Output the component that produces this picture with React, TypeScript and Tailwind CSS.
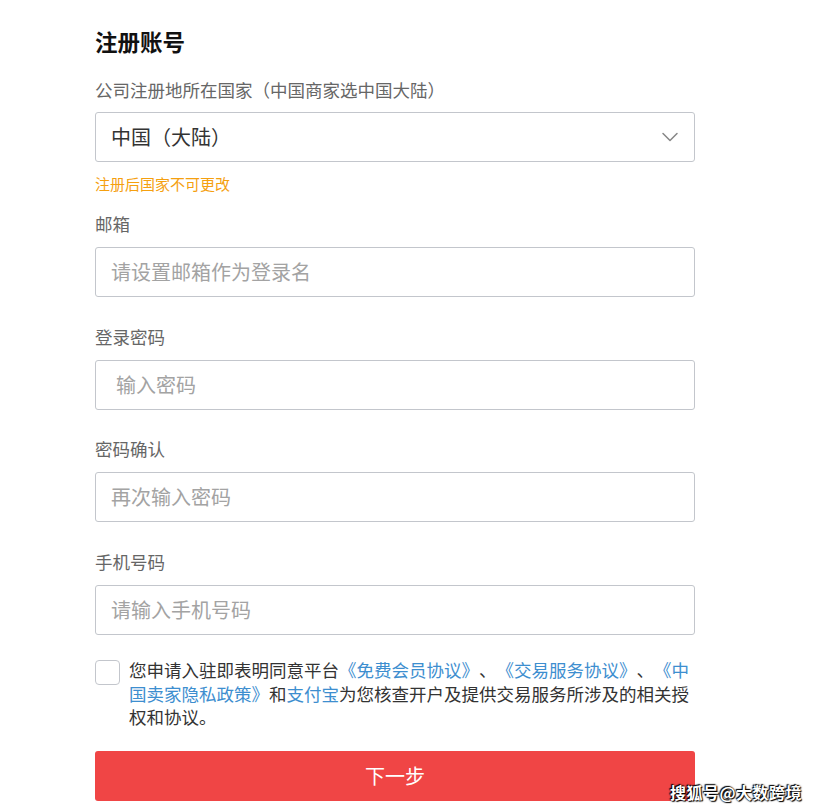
import { ChevronDown } from 'lucide-react';

const font = { fontFamily: '"Microsoft YaHei", "Noto Sans CJK SC", sans-serif' };

function Field({ label, placeholder, indent, mb }: { label: string; placeholder: string; indent?: boolean; mb: string }) {
  return (
    <div className={mb}>
      <p className="text-[17.5px] leading-[24px] text-[#666] mb-[11px]">{label}</p>
      <div className="h-[50px] border border-[#c3c6cc] rounded-[3px] flex items-center">
        <span className={`text-[20px] text-[#a3a3a3] ${indent ? 'pl-[20px]' : 'pl-[15px]'}`}>{placeholder}</span>
      </div>
    </div>
  );
}

export default function App() {
  return (
    <div className="relative w-[820px] h-[809px] bg-white overflow-hidden [text-spacing-trim:space-all]" style={font}>
      <div className="ml-[95px] w-[600px] pt-[26px]">
        <h1 className="text-[22.5px] leading-[30px] font-bold text-[#111]">注册账号</h1>

        <p className="mt-[22px] text-[17.5px] leading-[24px] text-[#666] mb-[10px]">公司注册地所在国家（中国商家选中国大陆）</p>
        <div className="h-[50px] border border-[#c3c6cc] rounded-[3px] flex items-center justify-between pl-[15px] pr-[10px]">
          <span className="text-[20px] text-[#333]">中国（大陆）</span>
          <ChevronDown size={28} strokeWidth={1.3} className="text-[#888]" />
        </div>
        <p className="mt-[12px] text-[15px] leading-[20px] text-[#f5a00f] mb-[18px]">注册后国家不可更改</p>

        <Field label="邮箱" placeholder="请设置邮箱作为登录名" mb="mb-[28px]" />
        <Field label="登录密码" placeholder="输入密码" indent mb="mb-[27px]" />
        <Field label="密码确认" placeholder="再次输入密码" mb="mb-[28px]" />
        <Field label="手机号码" placeholder="请输入手机号码" mb="mb-[25px]" />

        <div className="flex items-start">
          <div className="w-[25px] h-[25px] shrink-0 border border-[#c3c6cc] rounded-[4px]" />
          <p className="ml-[9px] text-[17.5px] leading-[23.5px] text-[#333] -mt-[2px]">
            您申请入驻即表明同意平台<span className="text-[#3d8ecf]">《免费会员协议》</span>、<span className="text-[#3d8ecf]">《交易服务协议》</span>、<span className="text-[#3d8ecf]">《中国卖家隐私政策》</span>和<span className="text-[#3d8ecf]">支付宝</span>为您核查开户及提供交易服务所涉及的相关授权和协议。
          </p>
        </div>

        <button className="mt-[22px] w-full h-[50px] bg-[#f04545] rounded-[3px] text-white text-[20px]">下一步</button>
      </div>

      <div
        className="absolute left-[670px] top-[780px] text-[16px] font-bold text-white tracking-[0.5px]"
        style={{ textShadow: '0 0 2px #000, 1px 1px 1px #000, -1px -1px 1px #000' }}
      >
        搜狐号@大数跨境
      </div>
    </div>
  );
}
